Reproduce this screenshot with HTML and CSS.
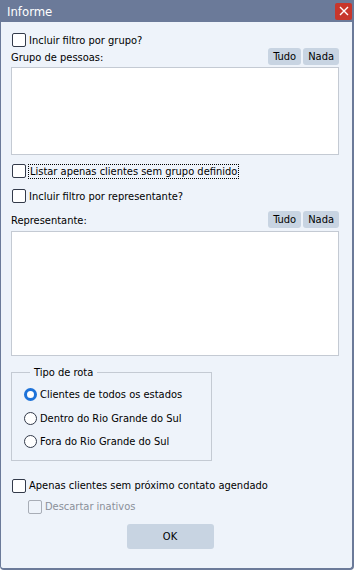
FILE: index.html
```html
<!DOCTYPE html>
<html lang="pt">
<head>
  <meta charset="UTF-8" />
  <title>Informe</title>
  <link rel="stylesheet" href="styles.css">
</head>
<body>
  <div class="window">
    <div class="titlebar">
      <span class="title">Informe</span>
      <span class="close">
        <svg width="10" height="10" viewBox="0 0 10 10"><path d="M1 1L9 9M9 1L1 9" stroke="#fff" stroke-width="1.4"/></svg>
      </span>
    </div>

    <div class="content">
      <label class="check"><span class="box"></span>Incluir filtro por grupo?</label>

      <div class="list-head">
        <span>Grupo de pessoas:</span>
        <div class="mini-btns"><button>Tudo</button><button>Nada</button></div>
      </div>
      <div class="listbox list-grupo"></div>

      <label class="check check-list"><span class="box"></span><span class="focus">Listar apenas clientes sem grupo definido</span></label>
      <label class="check check-rep"><span class="box"></span>Incluir filtro por representante?</label>

      <div class="list-head">
        <span>Representante:</span>
        <div class="mini-btns"><button>Tudo</button><button>Nada</button></div>
      </div>
      <div class="listbox list-rep"></div>

      <fieldset class="group">
        <legend>Tipo de rota</legend>
        <label class="radio"><span class="dot checked"></span>Clientes de todos os estados</label>
        <label class="radio"><span class="dot"></span>Dentro do Rio Grande do Sul</label>
        <label class="radio"><span class="dot"></span>Fora do Rio Grande do Sul</label>
      </fieldset>

      <label class="check check-agenda"><span class="box"></span>Apenas clientes sem próximo contato agendado</label>
      <label class="check disabled"><span class="box"></span>Descartar inativos</label>

      <div class="footer"><button class="ok">OK</button></div>
    </div>
  </div>
</body>
</html>
```

FILE: styles.css
```css
body {
  margin: 0;
  font-family: "DejaVu Sans Condensed", "DejaVu Sans", sans-serif;
  font-stretch: condensed;
  font-size: 11px;
  color: #000;
  background: #fff;
}
.window {
  width: 354px;
  height: 570px;
  box-sizing: border-box;
  border: 1px solid #6b7a99;
  border-top: none;
  border-right-width: 2px;
  border-bottom-width: 2px;
  border-radius: 0 0 4px 4px;
  background: #eef3fa;
  display: flex;
  flex-direction: column;
}
.titlebar {
  height: 22px;
  background: #6b7a99;
  display: flex;
  align-items: center;
  justify-content: space-between;
  padding: 0 1px 0 7px;
  margin: 0 -2px 0 -1px;
}
.title {
  color: #fff;
  font-size: 13px;
}
.close {
  width: 17px;
  height: 17px;
  background: #c8362b;
  border-radius: 2px;
  display: flex;
  align-items: center;
  justify-content: center;
  margin-right: 1px;
}
.content {
  padding: 10px 13px 0 10px;
  display: flex;
  flex-direction: column;
}
.check {
  display: flex;
  align-items: center;
  gap: 3px;
  height: 16px;
  margin-left: 1px;
}
.box {
  width: 12px;
  height: 12px;
  border: 1px solid #333a4a;
  border-radius: 2px;
  background: #fff;
}
.list-head {
  display: flex;
  justify-content: space-between;
  align-items: flex-end;
}
.list-head span {
  padding-bottom: 1px;
}
.mini-btns {
  display: flex;
  gap: 2px;
}
.mini-btns button {
  font: inherit;
  height: 17px;
  padding: 0 5px;
  border: none;
  border-radius: 3px;
  background: #c8d4e2;
  color: #000;
}
.listbox {
  background: #fff;
  border: 1px solid #c4cad3;
  margin-top: 2px;
}
.list-grupo {
  height: 86px;
}
.list-rep {
  height: 123px;
}
.check-list {
  margin-top: 8px;
}
.focus {
  outline: 1px dotted #000;
  padding: 0 1px;
}
.check-rep {
  margin-top: 9px;
}
.check-rep + .list-head {
  margin-top: 7px;
}
.list-rep {
  margin-top: 3px;
}
.group {
  width: 201px;
  box-sizing: border-box;
  margin: 10px 0 0;
  padding: 4px 12px 6px;
  border: 1px solid #c4cad3;
}
.group legend {
  padding: 0 4px;
  margin-left: 6px;
}
.radio {
  display: flex;
  align-items: center;
  gap: 3px;
  height: 23.5px;
}
.dot {
  width: 11px;
  height: 11px;
  border: 1px solid #333a4a;
  border-radius: 50%;
  background: #fff;
}
.dot.checked {
  width: 7px;
  height: 7px;
  border: 3px solid #1d72d9;
}
.check-agenda {
  margin-top: 17px;
}
.disabled {
  margin-left: 17px;
  margin-top: 5px;
  color: #8a8f99;
}
.disabled .box {
  border-color: #a8adb6;
  background: transparent;
}
.footer {
  display: flex;
  justify-content: center;
  margin-top: 9px;
  padding-right: 10px;
}
.ok {
  font: inherit;
  width: 87px;
  height: 25px;
  border: none;
  border-radius: 3px;
  background: #c8d4e2;
}
```
